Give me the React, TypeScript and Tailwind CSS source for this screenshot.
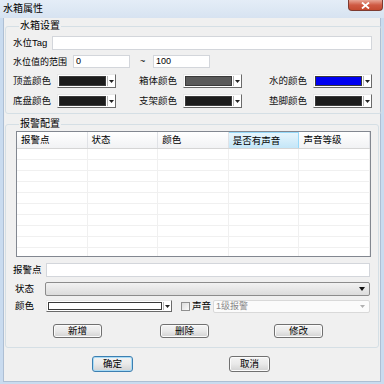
import React from 'react';

const font = { fontFamily: '"Liberation Sans", "Noto Sans CJK SC", sans-serif' };

const ColorCombo = ({ color, width = 'w-[59px]' }: { color: string; width?: string }) => (
  <div
    className={`${width} h-[14px] shrink-0 flex items-stretch bg-white border border-t-[#e8e8e8] border-l-[#e8e8e8] border-r-[#6a6a6a] border-b-[#6a6a6a] p-[1px]`}
  >
    <div className="flex-1 border border-[#3a3a3a]" style={{ backgroundColor: color }} />
    <div className="w-px bg-[#b5b5b5] ml-[1px]" />
    <div className="w-[6px] flex items-center justify-center">
      <svg width="5" height="3" viewBox="0 0 5 3">
        <path d="M0 0h5L2.5 3z" fill="#222" />
      </svg>
    </div>
  </div>
);

const ColorField = ({ label, color }: { label: string; color: string }) => (
  <div className="flex items-center">
    <span className="w-[44px] shrink-0 whitespace-nowrap text-[9.5px] leading-[12px] text-[#111]">{label}</span>
    <ColorCombo color={color} />
  </div>
);

const Button = ({ label, primary }: { label: string; primary?: boolean }) => (
  <div
    className={`flex items-center justify-center rounded-[3px] border text-[9.5px] leading-[12px] bg-gradient-to-b from-[#f4f4f4] via-[#e9e9e9] to-[#d2d2d2] ${
      primary
        ? 'w-[41px] h-[16px] border-[#3c7fb1] shadow-[inset_0_0_0_1px_#a9dbf5]'
        : 'w-[49px] h-[14px] border-[#707070] shadow-[inset_0_0_0_1px_#fbfbfb]'
    }`}
  >
    {label}
  </div>
);

const columns = ['报警点', '状态', '颜色', '是否有声音', '声音等级'];

export default function App() {
  return (
    <div className="w-[384px] h-[384px] bg-[#c9dbef] flex flex-col text-black overflow-hidden" style={font}>
      {/* title bar */}
      <div className="h-[18px] shrink-0 flex justify-between bg-gradient-to-b from-[#e4edf7] to-[#d7e3f1]">
        <span className="pl-[3px] pt-[3px] text-[10px] leading-[12px] whitespace-nowrap">水箱属性</span>
        <div className="w-[35px] h-[11px] mr-[1px] rounded-b-[4px] border border-t-0 border-[#7d3a30] bg-gradient-to-b from-[#e7a596] via-[#cf5a44] to-[#c44a30] flex items-center justify-center">
          <svg width="9" height="7" viewBox="0 0 9 7">
            <path d="M1 0.5l7 6M8 0.5l-7 6" stroke="#fff" strokeWidth="1.8" />
          </svg>
        </div>
      </div>

      {/* client area */}
      <div className="flex-1 mx-[3px] mb-[2px] bg-[#f0f0f0] border border-[#aebfd4] border-t-0 flex flex-col px-[1px]">
        {/* 水箱设置 */}
        <fieldset className="mt-[2px] border border-[#d5dfe5] rounded-[3px] pl-[7px] pr-[9px] pb-[5px]">
          <legend className="ml-[6px] px-[1px] text-[10px] leading-[12px] whitespace-nowrap">水箱设置</legend>
          <div className="mt-[4px] h-[14px] flex items-center">
            <span className="w-[39px] shrink-0 whitespace-nowrap text-[9.5px] leading-[12px]">水位Tag</span>
            <div className="flex-1 h-[14px] bg-white border border-[#d3d6db]" />
          </div>
          <div className="mt-[5px] h-[13px] flex items-center">
            <span className="w-[60px] shrink-0 whitespace-nowrap text-[9px] leading-[12px]">水位值的范围</span>
            <div className="w-[57px] h-[13px] bg-white border border-[#d3d6db] pl-[2px] text-[9px] leading-[11px]">0</div>
            <span className="w-[23px] pl-[10px] text-[9px] leading-[11px]">~</span>
            <div className="w-[57px] h-[13px] bg-white border border-[#d3d6db] pl-[2px] text-[9px] leading-[11px]">100</div>
          </div>
          <div className="mt-[6px] grid grid-cols-[126px_130px_1fr]">
            <ColorField label="顶盖颜色" color="#1c1c1c" />
            <ColorField label="箱体颜色" color="#5a5a5a" />
            <ColorField label="水的颜色" color="#0000f0" />
          </div>
          <div className="mt-[6px] grid grid-cols-[126px_130px_1fr]">
            <ColorField label="底盘颜色" color="#1c1c1c" />
            <ColorField label="支架颜色" color="#1c1c1c" />
            <ColorField label="垫脚颜色" color="#1c1c1c" />
          </div>
        </fieldset>

        {/* 报警配置 */}
        <fieldset className="mt-[4px] border border-[#d5dfe5] rounded-[3px] pl-[7px] pr-[8px] pb-[9px]">
          <legend className="ml-[6px] px-[1px] text-[10px] leading-[12px] whitespace-nowrap">报警配置</legend>
          {/* table */}
          <div className="mt-[1px] ml-[3px] mr-[-1px] h-[126px] bg-white border border-[#828790] flex flex-col overflow-hidden">
            <div className="h-[17px] shrink-0 flex border-b border-[#d5d5d5] bg-gradient-to-b from-white to-[#f1f2f4]">
              {columns.map((c, i) => (
                <div
                  key={c}
                  className={`flex-1 flex items-center pl-[4px] text-[9.5px] leading-[12px] whitespace-nowrap border-r ${
                    i === 3
                      ? 'bg-gradient-to-b from-[#e6f5fc] to-[#c4e6f8] border-[#96d9f9] border-t'
                      : 'border-[#e0e2e6]'
                  }`}
                >
                  {c}
                </div>
              ))}
            </div>
            <div className="flex-1 flex flex-col">
              {Array.from({ length: 10 }).map((_, r) => (
                <div key={r} className="h-[11px] shrink-0 flex border-b border-[#f0f0f0]">
                  {columns.map((c) => (
                    <div key={c} className="flex-1 border-r border-[#f0f0f0]" />
                  ))}
                </div>
              ))}
            </div>
          </div>

          <div className="mt-[6px] h-[14px] flex items-center">
            <span className="w-[33px] shrink-0 whitespace-nowrap text-[9.5px] leading-[12px]">报警点</span>
            <div className="flex-1 h-[14px] bg-white border border-[#d3d6db]" />
          </div>
          <div className="mt-[5px] h-[14px] flex items-center">
            <span className="w-[32px] shrink-0 whitespace-nowrap pl-[2px] text-[9.5px] leading-[12px]">状态</span>
            <div className="flex-1 h-[14px] rounded-[2px] border border-[#8c8c8c] bg-gradient-to-b from-[#f2f2f2] to-[#dcdcdc] flex items-center justify-end pr-[4px]">
              <svg width="6" height="4" viewBox="0 0 6 4">
                <path d="M0 0h6L3 4z" fill="#111" />
              </svg>
            </div>
          </div>
          <div className="mt-[4px] h-[12px] flex items-center">
            <span className="w-[33px] shrink-0 whitespace-nowrap pl-[2px] text-[9.5px] leading-[12px]">颜色</span>
            <ColorCombo color="#ffffff" width="w-[126px] !h-[12px]" />
            <div className="ml-[9px] shrink-0 w-[9px] h-[9px] border border-[#8f8f8f] bg-gradient-to-br from-[#dcdcdc] to-[#fbfbfb]" />
            <span className="ml-[2px] w-[21px] shrink-0 whitespace-nowrap text-[9.5px] leading-[12px]">声音</span>
            <div className="flex-1 h-[13px] bg-[#fbfbfb] border border-[#d9d9d9] rounded-[2px] flex items-center justify-between pl-[2px] pr-[4px]">
              <span className="text-[9px] leading-[11px] text-[#8a8a8a] whitespace-nowrap">1级报警</span>
              <svg width="5" height="3" viewBox="0 0 5 3">
                <path d="M0 0h5L2.5 3z" fill="#b0b0b0" />
              </svg>
            </div>
          </div>
          <div className="mt-[12px] flex pl-[40px]">
            <Button label="新增" />
            <div className="ml-[58px]">
              <Button label="删除" />
            </div>
            <div className="ml-[65px]">
              <Button label="修改" />
            </div>
          </div>
        </fieldset>

        <div className="mt-[8px] flex pl-[87px]">
          <Button label="确定" primary />
          <div className="ml-[96px]">
            <div className="w-[41px] h-[16px] flex items-center justify-center rounded-[3px] border border-[#707070] shadow-[inset_0_0_0_1px_#fbfbfb] text-[9.5px] leading-[12px] bg-gradient-to-b from-[#f4f4f4] via-[#e9e9e9] to-[#d2d2d2]">
              取消
            </div>
          </div>
        </div>
      </div>
    </div>
  );
}
